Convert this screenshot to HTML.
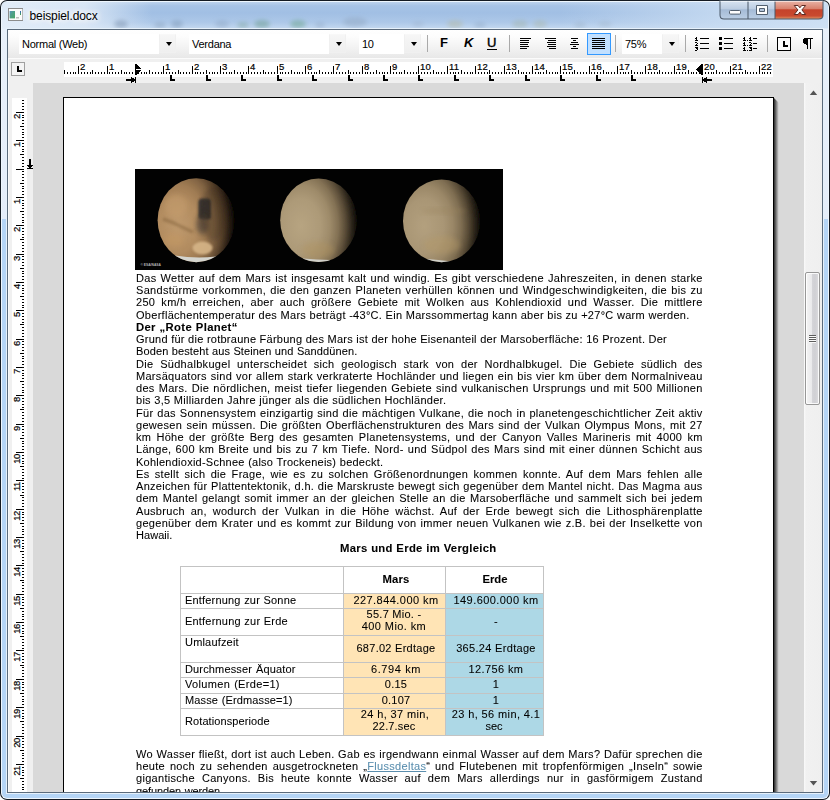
<!DOCTYPE html><html><head><meta charset="utf-8"><title>beispiel.docx</title><style>
*{box-sizing:border-box;margin:0;padding:0}
html,body{width:830px;height:800px;overflow:hidden;background:#fff;font-family:"Liberation Sans",sans-serif;}
.abs{position:absolute}
#win{position:absolute;left:0;top:0;width:830px;height:800px;border-radius:7px 7px 7px 7px;background:#141a22;overflow:hidden}
#win .in1{position:absolute;left:1px;top:1px;right:1px;bottom:1px;border-radius:6px;background:#eef6fd}
#win .glass{position:absolute;left:2px;top:2px;right:2px;bottom:2px;border-radius:5px;background:linear-gradient(180deg,#e9f1fb 0,#e4edf9 217px,#b5d5f6 217px,#b5d5f6 100%)}
#title{position:absolute;left:2px;top:2px;width:826px;height:27px;border-radius:5px 5px 0 0;
  background:linear-gradient(180deg,#bcd2ec 0%,#a7c3e6 14%,#a1bfe4 40%,#adc8e8 75%,#c4d9f0 100%);}
#titleglowL{position:absolute;left:2px;top:2px;width:150px;height:27px;border-radius:5px 0 0 0;
  background:linear-gradient(90deg,rgba(228,238,249,.95) 0%,rgba(222,234,247,.88) 55%,rgba(210,226,243,0) 100%)}
#titleglowR{position:absolute;left:560px;top:2px;width:268px;height:27px;border-radius:0 5px 0 0;
  background:linear-gradient(90deg,rgba(205,224,244,0) 0%,rgba(203,222,243,.8) 60%,rgba(208,226,245,.9) 100%)}
#ttext{position:absolute;left:29.5px;top:8.5px;font-size:12px;line-height:14px;color:#000;white-space:pre;letter-spacing:-0.1px;
  text-shadow:0 0 6px #fff,0 0 6px #fff,0 0 10px #fff}
#inner-wl{position:absolute;left:6px;top:28px;width:818px;height:766px;background:#e6f1fb}
#cborder{position:absolute;left:7px;top:29px;width:816px;height:764px;background:#5b6b7c}
#client{position:absolute;left:8px;top:30px;width:814px;height:762px;background:#f0f0f0;overflow:hidden}
/* coordinates inside client are offset by (8,30); use .c wrapper with negative offset to use absolute coords */
#c{position:absolute;left:-8px;top:-30px;width:830px;height:800px}
#tb{position:absolute;left:8px;top:30px;width:814px;height:28px;background:linear-gradient(180deg,#ffffff 0%,#fcfcfc 25%,#f3f3f3 60%,#e8e8e8 100%)}
#tbline{position:absolute;left:8px;top:58px;width:814px;height:1px;background:#fbfbfb}
.combo{position:absolute;top:34px;height:20px;background:#fff}
.combo .t{position:absolute;left:3px;top:3px;font-size:11px;line-height:14px;white-space:pre;letter-spacing:-0.25px;color:#000}
.cbtn{position:absolute;top:34px;height:19px;width:17px;background:linear-gradient(180deg,#f6f6f6,#efefef);border:1px solid #f0f0f0;border-top-color:#f8f8f8}
.cbtn:after{content:"";position:absolute;left:6px;top:7px;border:3.5px solid transparent;border-top:4px solid #000;border-bottom:0}
.sep{position:absolute;top:35px;width:1px;height:17px;background:#a9a9a9}
.ico{position:absolute}
.doc{position:absolute;left:33px;top:83px;width:771px;height:709px;background:#d9d9d9}
.page{position:absolute;left:63px;top:97px;width:711px;height:720px;background:#fff;border:1px solid #000}
.pshadow{position:absolute;left:774px;top:98px;width:5px;height:700px;background:linear-gradient(90deg,#2e2e2e 0%,#4d4d4d 20%,#7c7c7c 45%,#a9a9a9 70%,#cfcfcf 90%,#d9d9d9 100%);clip-path:polygon(0 0,100% 5px,100% 100%,0 100%);}
.L{position:absolute;white-space:pre;transform-origin:0 0;color:#000;text-align:justify;text-align-last:justify;-webkit-text-stroke-width:0.07px}
.V{-webkit-text-stroke-width:0.07px}
.tcell{position:absolute;}
</style></head><body>
<div id="win"><div class="in1"></div><div class="glass"></div>
<div id="title"></div><div id="titleglowL"></div><div id="titleglowR"></div>
<svg class="abs" style="left:2px;top:2px" width="826" height="27" viewBox="2 2 826 27"><defs><filter id="bl" x="-50%" y="-50%" width="200%" height="200%"><feGaussianBlur stdDeviation="2"/></filter></defs><g filter="url(#bl)">
<ellipse cx="121" cy="24" rx="7" ry="4" fill="#7f97b3" opacity="0.55"/>
<ellipse cx="160" cy="25" rx="6" ry="3" fill="#8aa2be" opacity="0.5"/>
<ellipse cx="177" cy="24" rx="6" ry="4" fill="#7f9ab8" opacity="0.5"/>
<ellipse cx="222" cy="24" rx="7" ry="4" fill="#86a0bd" opacity="0.4"/>
<ellipse cx="243" cy="25" rx="6" ry="3" fill="#7fa6a0" opacity="0.5"/>
<ellipse cx="262" cy="24" rx="8" ry="4" fill="#6f9f93" opacity="0.55"/>
<ellipse cx="298" cy="24" rx="8" ry="4" fill="#6fa592" opacity="0.55"/>
<ellipse cx="320" cy="25" rx="5" ry="3" fill="#8aa2be" opacity="0.4"/>
<ellipse cx="355" cy="22" rx="12" ry="5" fill="#8fa4bf" opacity="0.45"/>
<ellipse cx="418" cy="24" rx="6" ry="3" fill="#9ab0c8" opacity="0.4"/>
<ellipse cx="455" cy="24" rx="8" ry="4" fill="#b3b69c" opacity="0.45"/>
<ellipse cx="480" cy="25" rx="6" ry="3" fill="#8aa2be" opacity="0.4"/>
<ellipse cx="520" cy="24" rx="8" ry="4" fill="#9fb09f" opacity="0.4"/>
<ellipse cx="540" cy="24" rx="7" ry="4" fill="#a9b3a0" opacity="0.4"/>
<ellipse cx="580" cy="25" rx="6" ry="3" fill="#9aaec4" opacity="0.4"/>
<ellipse cx="605" cy="24" rx="7" ry="3" fill="#9aaec4" opacity="0.35"/>
</g></svg>
<div style="position:absolute;left:2px;top:28px;width:826px;height:1px;background:rgba(225,237,250,.75)"></div>
<svg class="abs" style="left:8px;top:8px" width="15" height="13" viewBox="0 0 15 13">
<defs><linearGradient id="ig" x1="0" y1="0" x2="1" y2="1"><stop offset="0" stop-color="#5a8fc0"/><stop offset=".35" stop-color="#4f9f8f"/><stop offset="1" stop-color="#4aa564"/></linearGradient>
<linearGradient id="ig2" x1="0" y1="0" x2="0" y2="1"><stop offset="0" stop-color="#2f62c0"/><stop offset="1" stop-color="#4aa850"/></linearGradient></defs>
<rect x="0" y="0" width="15" height="13" fill="#8c8c8c"/><rect x="1" y="1" width="13.4" height="11" fill="#fbfbfb"/>
<rect x="1.6" y="3" width="5.4" height="7.4" fill="url(#ig)"/><rect x="8" y="9" width="3" height="1.5" fill="#bdbdbd"/><rect x="12" y="3" width="1" height="4" fill="url(#ig2)"/></svg>
<div id="ttext">beispiel.docx</div>
<svg class="abs" style="left:719px;top:0px" width="106" height="21" viewBox="0 0 106 21">
<defs>
<linearGradient id="bg1" x1="0" y1="0" x2="0" y2="1"><stop offset="0" stop-color="#d7e3f1"/><stop offset=".45" stop-color="#bccde2"/><stop offset=".5" stop-color="#a5bbd6"/><stop offset="1" stop-color="#b9cde4"/></linearGradient>
<linearGradient id="bg2" x1="0" y1="0" x2="0" y2="1"><stop offset="0" stop-color="#e9b3a6"/><stop offset=".45" stop-color="#d9806c"/><stop offset=".5" stop-color="#c5432b"/><stop offset=".85" stop-color="#c94a2f"/><stop offset="1" stop-color="#dd8a5e"/></linearGradient>
</defs>
<path d="M0.5,0 V15 Q0.5,19.5 5,19.5 H99.5 Q104.5,19.5 104.5,15 V0 Z" fill="#4a5868"/>
<path d="M1.5,1 V15 Q1.5,18.5 5,18.5 H28.5 V1 Z" fill="url(#bg1)"/>
<path d="M29.5,1 V18.5 H55.5 V1 Z" fill="url(#bg1)"/>
<path d="M56.5,1 V18.5 H99.5 Q103.5,18.5 103.5,15 V1 Z" fill="url(#bg2)"/>
<path d="M1.5,1.5 H103.5" stroke="rgba(255,255,255,.55)" stroke-width="1"/>
<rect x="10.5" y="10.5" width="11" height="3.6" rx="1" fill="#fdfdfd" stroke="#53606f" stroke-width="1"/>
<path d="M37.5,5.5 h11 v9 h-11 z" fill="#fdfdfd" stroke="#53606f" stroke-width="1"/><path d="M40.5,8.5 h5 v3 h-5 z" fill="#b5c6dc" stroke="#53606f" stroke-width="1"/>
<path d="M75.2,5.5 l3.9,0 l1.8,2.3 l1.8,-2.3 l3.9,0 l-3.7,4.4 l3.7,4.6 l-3.9,0 l-1.8,-2.5 l-1.8,2.5 l-3.9,0 l3.7,-4.6 z" fill="#fdfdfd" stroke="#5d2a22" stroke-width="1" stroke-linejoin="round"/>
</svg>
<div id="inner-wl"></div><div id="cborder"></div><div id="client"><div id="c">
<div id="tb"></div><div id="tbline"></div>
<div class="combo" style="left:19px;width:140px"><div class="t">Normal (Web)</div></div><div class="cbtn" style="left:159px"></div>
<div class="combo" style="left:189px;width:140px"><div class="t">Verdana</div></div><div class="cbtn" style="left:329px"></div>
<div class="combo" style="left:359px;width:45px"><div class="t">10</div></div><div class="cbtn" style="left:404px"></div>
<div class="combo" style="left:622px;width:40px"><div class="t">75%</div></div><div class="cbtn" style="left:662px"></div>
<div class="sep" style="left:427px"></div>
<div class="sep" style="left:509px"></div>
<div class="sep" style="left:615px"></div>
<div class="sep" style="left:685px"></div>
<div class="sep" style="left:767px"></div>
<div class="abs" style="left:440px;top:35px;font-size:13px;font-weight:700;line-height:16px">F</div>
<div class="abs" style="left:464px;top:35px;font-size:13px;font-weight:700;font-style:italic;line-height:16px">K</div>
<div class="abs" style="left:487px;top:35px;font-size:13px;font-weight:400;line-height:16px;-webkit-text-stroke:0.4px #000">U</div><div class="abs" style="left:487px;top:49px;width:10px;height:1px;background:#000"></div>
<div class="abs" style="left:520px;top:38px;width:11px;height:1px;background:#000"></div><div class="abs" style="left:520px;top:40px;width:9px;height:1px;background:#000"></div><div class="abs" style="left:520px;top:42px;width:9px;height:1px;background:#000"></div><div class="abs" style="left:520px;top:44px;width:8px;height:1px;background:#000"></div><div class="abs" style="left:520px;top:46px;width:9px;height:1px;background:#000"></div><div class="abs" style="left:520px;top:48px;width:7px;height:1px;background:#000"></div>
<div class="abs" style="left:545px;top:38px;width:11px;height:1px;background:#000"></div><div class="abs" style="left:548px;top:40px;width:8px;height:1px;background:#000"></div><div class="abs" style="left:547px;top:42px;width:9px;height:1px;background:#000"></div><div class="abs" style="left:548px;top:44px;width:8px;height:1px;background:#000"></div><div class="abs" style="left:547px;top:46px;width:9px;height:1px;background:#000"></div><div class="abs" style="left:549px;top:48px;width:7px;height:1px;background:#000"></div>
<div class="abs" style="left:571.0px;top:38px;width:7px;height:1px;background:#000"></div><div class="abs" style="left:573.0px;top:40px;width:3px;height:1px;background:#000"></div><div class="abs" style="left:571.0px;top:42px;width:7px;height:1px;background:#000"></div><div class="abs" style="left:570.0px;top:44px;width:9px;height:1px;background:#000"></div><div class="abs" style="left:573.0px;top:46px;width:3px;height:1px;background:#000"></div><div class="abs" style="left:571.0px;top:48px;width:7px;height:1px;background:#000"></div>
<div class="abs" style="left:587px;top:33px;width:24px;height:22px;background:#c2e0ff;border:1px solid #3399ff"></div>
<div class="abs" style="left:592px;top:38px;width:13px;height:1px;background:#000"></div><div class="abs" style="left:592px;top:40px;width:13px;height:1px;background:#000"></div><div class="abs" style="left:592px;top:42px;width:13px;height:1px;background:#000"></div><div class="abs" style="left:592px;top:44px;width:13px;height:1px;background:#000"></div><div class="abs" style="left:592px;top:46px;width:13px;height:1px;background:#000"></div><div class="abs" style="left:592px;top:48px;width:13px;height:1px;background:#000"></div>
<svg class="abs" style="left:694px;top:35px" width="18" height="18" viewBox="694 35 18 18" shape-rendering="crispEdges"><g fill="#000"><rect x="700" y="38" width="9" height="1"/><rect x="700" y="43" width="9" height="1"/><rect x="700" y="48" width="9" height="1"/><rect x="696" y="37" width="1" height="1"/><rect x="695" y="38" width="2" height="1"/><rect x="696" y="39" width="1" height="1"/><rect x="695" y="40" width="3" height="1"/><rect x="695" y="42" width="2" height="1"/><rect x="697" y="43" width="1" height="1"/><rect x="696" y="44" width="1" height="1"/><rect x="695" y="45" width="3" height="1"/><rect x="695" y="47" width="3" height="1"/><rect x="696" y="48" width="2" height="1"/><rect x="697" y="49" width="1" height="1"/><rect x="695" y="50" width="2" height="1"/></g></svg>
<svg class="abs" style="left:718px;top:35px" width="18" height="18" viewBox="718 35 18 18" shape-rendering="crispEdges"><g fill="#000">
<rect x="719" y="37" width="3" height="3"/><rect x="719" y="42" width="3" height="3"/><rect x="719" y="47" width="3" height="3"/>
<rect x="724" y="38" width="9" height="1"/><rect x="724" y="43" width="9" height="1"/><rect x="724" y="48" width="9" height="1"/></g></svg>
<svg class="abs" style="left:742px;top:35px" width="18" height="18" viewBox="742 35 18 18" shape-rendering="crispEdges"><g fill="#000"><rect x="744" y="37" width="1" height="4"/><rect x="743" y="38" width="1" height="1"/><rect x="743" y="40" width="3" height="1"/><rect x="747" y="40" width="1" height="1"/><rect x="750" y="37" width="1" height="4"/><rect x="749" y="38" width="1" height="1"/><rect x="749" y="40" width="3" height="1"/><rect x="753" y="38" width="4" height="1"/><rect x="744" y="42" width="1" height="4"/><rect x="743" y="43" width="1" height="1"/><rect x="743" y="45" width="3" height="1"/><rect x="747" y="45" width="1" height="1"/><rect x="749" y="42" width="2" height="1"/><rect x="751" y="43" width="1" height="1"/><rect x="750" y="44" width="1" height="1"/><rect x="749" y="45" width="3" height="1"/><rect x="753" y="43" width="4" height="1"/><rect x="744" y="47" width="1" height="4"/><rect x="743" y="48" width="1" height="1"/><rect x="743" y="50" width="3" height="1"/><rect x="747" y="50" width="1" height="1"/><rect x="749" y="47" width="3" height="1"/><rect x="750" y="48" width="2" height="1"/><rect x="751" y="49" width="1" height="1"/><rect x="749" y="50" width="3" height="1"/><rect x="753" y="48" width="4" height="1"/></g></svg>
<div class="abs" style="left:777px;top:37px;width:14px;height:14px;border:1px solid #000;background:#fdfdfd"></div><div class="abs" style="left:783px;top:41px;width:2px;height:6px;background:#000"></div><div class="abs" style="left:783px;top:45px;width:5px;height:2px;background:#000"></div>
<svg class="abs" style="left:800px;top:35px" width="16" height="18" viewBox="800 35 16 18" shape-rendering="crispEdges"><g fill="#000"><rect x="804" y="38" width="9" height="1"/><rect x="803" y="39" width="5" height="1"/><rect x="803" y="40" width="5" height="1"/><rect x="803" y="41" width="5" height="1"/><rect x="803" y="42" width="5" height="1"/><rect x="804" y="43" width="4" height="1"/><rect x="806" y="44" width="2" height="1"/><rect x="810" y="39" width="1" height="1"/><rect x="810" y="40" width="1" height="1"/><rect x="810" y="41" width="1" height="1"/><rect x="810" y="42" width="1" height="1"/><rect x="810" y="43" width="1" height="1"/><rect x="810" y="44" width="1" height="1"/><rect x="810" y="45" width="1" height="1"/><rect x="810" y="46" width="1" height="1"/><rect x="810" y="47" width="1" height="1"/><rect x="810" y="48" width="1" height="1"/><rect x="807" y="45" width="1" height="1"/><rect x="807" y="46" width="1" height="1"/><rect x="807" y="47" width="1" height="1"/><rect x="807" y="48" width="1" height="1"/></g></svg>
<div class="abs" style="left:11px;top:62px;width:14px;height:14px;border:1px solid #a0a0a0;background:#f4f4f4"></div><div class="abs" style="left:17px;top:66px;width:2px;height:6px;background:#000"></div><div class="abs" style="left:17px;top:70px;width:5px;height:2px;background:#000"></div>
<div class="abs" style="left:64px;top:62px;width:709px;height:15px;background:#fff"></div>
<svg class="abs" style="left:0;top:59px" width="830" height="24" viewBox="0 59 830 24" shape-rendering="crispEdges"><g fill="#000"><rect x="64" y="70" width="1" height="4"/><rect x="67" y="72" width="1" height="2"/><rect x="70" y="72" width="1" height="2"/><rect x="73" y="72" width="1" height="2"/><rect x="75" y="72" width="1" height="2"/><rect x="78" y="66" width="1" height="8"/><rect x="81" y="72" width="1" height="2"/><rect x="84" y="72" width="1" height="2"/><rect x="87" y="72" width="1" height="2"/><rect x="90" y="72" width="1" height="2"/><rect x="92" y="70" width="1" height="4"/><rect x="95" y="72" width="1" height="2"/><rect x="98" y="72" width="1" height="2"/><rect x="101" y="72" width="1" height="2"/><rect x="104" y="72" width="1" height="2"/><rect x="107" y="66" width="1" height="8"/><rect x="109" y="72" width="1" height="2"/><rect x="112" y="72" width="1" height="2"/><rect x="115" y="72" width="1" height="2"/><rect x="118" y="72" width="1" height="2"/><rect x="121" y="70" width="1" height="4"/><rect x="124" y="72" width="1" height="2"/><rect x="126" y="72" width="1" height="2"/><rect x="129" y="72" width="1" height="2"/><rect x="132" y="72" width="1" height="2"/><rect x="138" y="72" width="1" height="2"/><rect x="141" y="72" width="1" height="2"/><rect x="144" y="72" width="1" height="2"/><rect x="146" y="72" width="1" height="2"/><rect x="149" y="70" width="1" height="4"/><rect x="152" y="72" width="1" height="2"/><rect x="155" y="72" width="1" height="2"/><rect x="158" y="72" width="1" height="2"/><rect x="161" y="72" width="1" height="2"/><rect x="163" y="66" width="1" height="8"/><rect x="166" y="72" width="1" height="2"/><rect x="169" y="72" width="1" height="2"/><rect x="172" y="72" width="1" height="2"/><rect x="175" y="72" width="1" height="2"/><rect x="178" y="70" width="1" height="4"/><rect x="180" y="72" width="1" height="2"/><rect x="183" y="72" width="1" height="2"/><rect x="186" y="72" width="1" height="2"/><rect x="189" y="72" width="1" height="2"/><rect x="192" y="66" width="1" height="8"/><rect x="195" y="72" width="1" height="2"/><rect x="197" y="72" width="1" height="2"/><rect x="200" y="72" width="1" height="2"/><rect x="203" y="72" width="1" height="2"/><rect x="206" y="70" width="1" height="4"/><rect x="209" y="72" width="1" height="2"/><rect x="212" y="72" width="1" height="2"/><rect x="214" y="72" width="1" height="2"/><rect x="217" y="72" width="1" height="2"/><rect x="220" y="66" width="1" height="8"/><rect x="223" y="72" width="1" height="2"/><rect x="226" y="72" width="1" height="2"/><rect x="229" y="72" width="1" height="2"/><rect x="231" y="72" width="1" height="2"/><rect x="234" y="70" width="1" height="4"/><rect x="237" y="72" width="1" height="2"/><rect x="240" y="72" width="1" height="2"/><rect x="243" y="72" width="1" height="2"/><rect x="246" y="72" width="1" height="2"/><rect x="248" y="66" width="1" height="8"/><rect x="251" y="72" width="1" height="2"/><rect x="254" y="72" width="1" height="2"/><rect x="257" y="72" width="1" height="2"/><rect x="260" y="72" width="1" height="2"/><rect x="263" y="70" width="1" height="4"/><rect x="265" y="72" width="1" height="2"/><rect x="268" y="72" width="1" height="2"/><rect x="271" y="72" width="1" height="2"/><rect x="274" y="72" width="1" height="2"/><rect x="277" y="66" width="1" height="8"/><rect x="280" y="72" width="1" height="2"/><rect x="282" y="72" width="1" height="2"/><rect x="285" y="72" width="1" height="2"/><rect x="288" y="72" width="1" height="2"/><rect x="291" y="70" width="1" height="4"/><rect x="294" y="72" width="1" height="2"/><rect x="297" y="72" width="1" height="2"/><rect x="299" y="72" width="1" height="2"/><rect x="302" y="72" width="1" height="2"/><rect x="305" y="66" width="1" height="8"/><rect x="308" y="72" width="1" height="2"/><rect x="311" y="72" width="1" height="2"/><rect x="314" y="72" width="1" height="2"/><rect x="316" y="72" width="1" height="2"/><rect x="319" y="70" width="1" height="4"/><rect x="322" y="72" width="1" height="2"/><rect x="325" y="72" width="1" height="2"/><rect x="328" y="72" width="1" height="2"/><rect x="331" y="72" width="1" height="2"/><rect x="333" y="66" width="1" height="8"/><rect x="336" y="72" width="1" height="2"/><rect x="339" y="72" width="1" height="2"/><rect x="342" y="72" width="1" height="2"/><rect x="345" y="72" width="1" height="2"/><rect x="348" y="70" width="1" height="4"/><rect x="350" y="72" width="1" height="2"/><rect x="353" y="72" width="1" height="2"/><rect x="356" y="72" width="1" height="2"/><rect x="359" y="72" width="1" height="2"/><rect x="362" y="66" width="1" height="8"/><rect x="365" y="72" width="1" height="2"/><rect x="367" y="72" width="1" height="2"/><rect x="370" y="72" width="1" height="2"/><rect x="373" y="72" width="1" height="2"/><rect x="376" y="70" width="1" height="4"/><rect x="379" y="72" width="1" height="2"/><rect x="382" y="72" width="1" height="2"/><rect x="384" y="72" width="1" height="2"/><rect x="387" y="72" width="1" height="2"/><rect x="390" y="66" width="1" height="8"/><rect x="393" y="72" width="1" height="2"/><rect x="396" y="72" width="1" height="2"/><rect x="399" y="72" width="1" height="2"/><rect x="401" y="72" width="1" height="2"/><rect x="404" y="70" width="1" height="4"/><rect x="407" y="72" width="1" height="2"/><rect x="410" y="72" width="1" height="2"/><rect x="413" y="72" width="1" height="2"/><rect x="416" y="72" width="1" height="2"/><rect x="418" y="66" width="1" height="8"/><rect x="421" y="72" width="1" height="2"/><rect x="424" y="72" width="1" height="2"/><rect x="427" y="72" width="1" height="2"/><rect x="430" y="72" width="1" height="2"/><rect x="433" y="70" width="1" height="4"/><rect x="436" y="72" width="1" height="2"/><rect x="438" y="72" width="1" height="2"/><rect x="441" y="72" width="1" height="2"/><rect x="444" y="72" width="1" height="2"/><rect x="447" y="66" width="1" height="8"/><rect x="450" y="72" width="1" height="2"/><rect x="453" y="72" width="1" height="2"/><rect x="455" y="72" width="1" height="2"/><rect x="458" y="72" width="1" height="2"/><rect x="461" y="70" width="1" height="4"/><rect x="464" y="72" width="1" height="2"/><rect x="467" y="72" width="1" height="2"/><rect x="470" y="72" width="1" height="2"/><rect x="472" y="72" width="1" height="2"/><rect x="475" y="66" width="1" height="8"/><rect x="478" y="72" width="1" height="2"/><rect x="481" y="72" width="1" height="2"/><rect x="484" y="72" width="1" height="2"/><rect x="487" y="72" width="1" height="2"/><rect x="489" y="70" width="1" height="4"/><rect x="492" y="72" width="1" height="2"/><rect x="495" y="72" width="1" height="2"/><rect x="498" y="72" width="1" height="2"/><rect x="501" y="72" width="1" height="2"/><rect x="504" y="66" width="1" height="8"/><rect x="506" y="72" width="1" height="2"/><rect x="509" y="72" width="1" height="2"/><rect x="512" y="72" width="1" height="2"/><rect x="515" y="72" width="1" height="2"/><rect x="518" y="70" width="1" height="4"/><rect x="521" y="72" width="1" height="2"/><rect x="523" y="72" width="1" height="2"/><rect x="526" y="72" width="1" height="2"/><rect x="529" y="72" width="1" height="2"/><rect x="532" y="66" width="1" height="8"/><rect x="535" y="72" width="1" height="2"/><rect x="538" y="72" width="1" height="2"/><rect x="540" y="72" width="1" height="2"/><rect x="543" y="72" width="1" height="2"/><rect x="546" y="70" width="1" height="4"/><rect x="549" y="72" width="1" height="2"/><rect x="552" y="72" width="1" height="2"/><rect x="555" y="72" width="1" height="2"/><rect x="557" y="72" width="1" height="2"/><rect x="560" y="66" width="1" height="8"/><rect x="563" y="72" width="1" height="2"/><rect x="566" y="72" width="1" height="2"/><rect x="569" y="72" width="1" height="2"/><rect x="572" y="72" width="1" height="2"/><rect x="574" y="70" width="1" height="4"/><rect x="577" y="72" width="1" height="2"/><rect x="580" y="72" width="1" height="2"/><rect x="583" y="72" width="1" height="2"/><rect x="586" y="72" width="1" height="2"/><rect x="589" y="66" width="1" height="8"/><rect x="591" y="72" width="1" height="2"/><rect x="594" y="72" width="1" height="2"/><rect x="597" y="72" width="1" height="2"/><rect x="600" y="72" width="1" height="2"/><rect x="603" y="70" width="1" height="4"/><rect x="606" y="72" width="1" height="2"/><rect x="608" y="72" width="1" height="2"/><rect x="611" y="72" width="1" height="2"/><rect x="614" y="72" width="1" height="2"/><rect x="617" y="66" width="1" height="8"/><rect x="620" y="72" width="1" height="2"/><rect x="623" y="72" width="1" height="2"/><rect x="625" y="72" width="1" height="2"/><rect x="628" y="72" width="1" height="2"/><rect x="631" y="70" width="1" height="4"/><rect x="634" y="72" width="1" height="2"/><rect x="637" y="72" width="1" height="2"/><rect x="640" y="72" width="1" height="2"/><rect x="642" y="72" width="1" height="2"/><rect x="645" y="66" width="1" height="8"/><rect x="648" y="72" width="1" height="2"/><rect x="651" y="72" width="1" height="2"/><rect x="654" y="72" width="1" height="2"/><rect x="657" y="72" width="1" height="2"/><rect x="659" y="70" width="1" height="4"/><rect x="662" y="72" width="1" height="2"/><rect x="665" y="72" width="1" height="2"/><rect x="668" y="72" width="1" height="2"/><rect x="671" y="72" width="1" height="2"/><rect x="674" y="66" width="1" height="8"/><rect x="676" y="72" width="1" height="2"/><rect x="679" y="72" width="1" height="2"/><rect x="682" y="72" width="1" height="2"/><rect x="685" y="72" width="1" height="2"/><rect x="688" y="70" width="1" height="4"/><rect x="691" y="72" width="1" height="2"/><rect x="693" y="72" width="1" height="2"/><rect x="696" y="72" width="1" height="2"/><rect x="699" y="72" width="1" height="2"/><rect x="702" y="66" width="1" height="8"/><rect x="705" y="72" width="1" height="2"/><rect x="708" y="72" width="1" height="2"/><rect x="711" y="72" width="1" height="2"/><rect x="713" y="72" width="1" height="2"/><rect x="716" y="70" width="1" height="4"/><rect x="719" y="72" width="1" height="2"/><rect x="722" y="72" width="1" height="2"/><rect x="725" y="72" width="1" height="2"/><rect x="728" y="72" width="1" height="2"/><rect x="730" y="66" width="1" height="8"/><rect x="733" y="72" width="1" height="2"/><rect x="736" y="72" width="1" height="2"/><rect x="739" y="72" width="1" height="2"/><rect x="742" y="72" width="1" height="2"/><rect x="745" y="70" width="1" height="4"/><rect x="747" y="72" width="1" height="2"/><rect x="750" y="72" width="1" height="2"/><rect x="753" y="72" width="1" height="2"/><rect x="756" y="72" width="1" height="2"/><rect x="759" y="66" width="1" height="8"/><rect x="762" y="72" width="1" height="2"/><rect x="764" y="72" width="1" height="2"/><rect x="767" y="72" width="1" height="2"/><rect x="770" y="72" width="1" height="2"/><rect x="170" y="75" width="2" height="6"/><rect x="170" y="79" width="5" height="2"/><rect x="206" y="75" width="2" height="6"/><rect x="206" y="79" width="5" height="2"/><rect x="241" y="75" width="2" height="6"/><rect x="241" y="79" width="5" height="2"/><rect x="277" y="75" width="2" height="6"/><rect x="277" y="79" width="5" height="2"/><rect x="312" y="75" width="2" height="6"/><rect x="312" y="79" width="5" height="2"/><rect x="348" y="75" width="2" height="6"/><rect x="348" y="79" width="5" height="2"/><rect x="383" y="75" width="2" height="6"/><rect x="383" y="79" width="5" height="2"/><rect x="418" y="75" width="2" height="6"/><rect x="418" y="79" width="5" height="2"/><rect x="454" y="75" width="2" height="6"/><rect x="454" y="79" width="5" height="2"/><rect x="489" y="75" width="2" height="6"/><rect x="489" y="79" width="5" height="2"/><rect x="525" y="75" width="2" height="6"/><rect x="525" y="79" width="5" height="2"/><rect x="560" y="75" width="2" height="6"/><rect x="560" y="79" width="5" height="2"/><rect x="596" y="75" width="2" height="6"/><rect x="596" y="79" width="5" height="2"/><rect x="631" y="75" width="2" height="6"/><rect x="631" y="79" width="5" height="2"/></g></svg>
<div class="abs" style="left:80px;top:61px;font-size:9.5px;line-height:11px;letter-spacing:0.15px;-webkit-text-stroke-width:0.2px;color:#000">2</div>
<div class="abs" style="left:109px;top:61px;font-size:9.5px;line-height:11px;letter-spacing:0.15px;-webkit-text-stroke-width:0.2px;color:#000">1</div>
<div class="abs" style="left:165px;top:61px;font-size:9.5px;line-height:11px;letter-spacing:0.15px;-webkit-text-stroke-width:0.2px;color:#000">1</div>
<div class="abs" style="left:194px;top:61px;font-size:9.5px;line-height:11px;letter-spacing:0.15px;-webkit-text-stroke-width:0.2px;color:#000">2</div>
<div class="abs" style="left:222px;top:61px;font-size:9.5px;line-height:11px;letter-spacing:0.15px;-webkit-text-stroke-width:0.2px;color:#000">3</div>
<div class="abs" style="left:250px;top:61px;font-size:9.5px;line-height:11px;letter-spacing:0.15px;-webkit-text-stroke-width:0.2px;color:#000">4</div>
<div class="abs" style="left:279px;top:61px;font-size:9.5px;line-height:11px;letter-spacing:0.15px;-webkit-text-stroke-width:0.2px;color:#000">5</div>
<div class="abs" style="left:307px;top:61px;font-size:9.5px;line-height:11px;letter-spacing:0.15px;-webkit-text-stroke-width:0.2px;color:#000">6</div>
<div class="abs" style="left:335px;top:61px;font-size:9.5px;line-height:11px;letter-spacing:0.15px;-webkit-text-stroke-width:0.2px;color:#000">7</div>
<div class="abs" style="left:364px;top:61px;font-size:9.5px;line-height:11px;letter-spacing:0.15px;-webkit-text-stroke-width:0.2px;color:#000">8</div>
<div class="abs" style="left:392px;top:61px;font-size:9.5px;line-height:11px;letter-spacing:0.15px;-webkit-text-stroke-width:0.2px;color:#000">9</div>
<div class="abs" style="left:420px;top:61px;font-size:9.5px;line-height:11px;letter-spacing:0.15px;-webkit-text-stroke-width:0.2px;color:#000">10</div>
<div class="abs" style="left:449px;top:61px;font-size:9.5px;line-height:11px;letter-spacing:0.15px;-webkit-text-stroke-width:0.2px;color:#000">11</div>
<div class="abs" style="left:477px;top:61px;font-size:9.5px;line-height:11px;letter-spacing:0.15px;-webkit-text-stroke-width:0.2px;color:#000">12</div>
<div class="abs" style="left:506px;top:61px;font-size:9.5px;line-height:11px;letter-spacing:0.15px;-webkit-text-stroke-width:0.2px;color:#000">13</div>
<div class="abs" style="left:534px;top:61px;font-size:9.5px;line-height:11px;letter-spacing:0.15px;-webkit-text-stroke-width:0.2px;color:#000">14</div>
<div class="abs" style="left:562px;top:61px;font-size:9.5px;line-height:11px;letter-spacing:0.15px;-webkit-text-stroke-width:0.2px;color:#000">15</div>
<div class="abs" style="left:591px;top:61px;font-size:9.5px;line-height:11px;letter-spacing:0.15px;-webkit-text-stroke-width:0.2px;color:#000">16</div>
<div class="abs" style="left:619px;top:61px;font-size:9.5px;line-height:11px;letter-spacing:0.15px;-webkit-text-stroke-width:0.2px;color:#000">17</div>
<div class="abs" style="left:647px;top:61px;font-size:9.5px;line-height:11px;letter-spacing:0.15px;-webkit-text-stroke-width:0.2px;color:#000">18</div>
<div class="abs" style="left:676px;top:61px;font-size:9.5px;line-height:11px;letter-spacing:0.15px;-webkit-text-stroke-width:0.2px;color:#000">19</div>
<div class="abs" style="left:704px;top:61px;font-size:9.5px;line-height:11px;letter-spacing:0.15px;-webkit-text-stroke-width:0.2px;color:#000">20</div>
<div class="abs" style="left:732px;top:61px;font-size:9.5px;line-height:11px;letter-spacing:0.15px;-webkit-text-stroke-width:0.2px;color:#000">21</div>
<div class="abs" style="left:761px;top:61px;font-size:9.5px;line-height:11px;letter-spacing:0.15px;-webkit-text-stroke-width:0.2px;color:#000">22</div>
<svg class="abs" style="left:120px;top:60px" width="30" height="24" viewBox="120 60 30 24" shape-rendering="crispEdges"><g fill="#000"><rect x="135" y="64" width="2" height="1"/><rect x="135" y="65" width="3" height="1"/><rect x="135" y="66" width="4" height="1"/><rect x="135" y="67" width="5" height="1"/><rect x="135" y="68" width="6" height="1"/><rect x="135" y="69" width="1" height="1"/><rect x="135" y="70" width="6" height="1"/><rect x="135" y="71" width="5" height="1"/><rect x="135" y="72" width="4" height="1"/><rect x="135" y="73" width="3" height="1"/><rect x="135" y="74" width="2" height="1"/><rect x="126" y="79" width="9" height="1"/><rect x="126" y="80" width="9" height="1"/><rect x="131" y="77" width="1" height="1"/><rect x="131" y="78" width="2" height="1"/><rect x="131" y="81" width="2" height="1"/><rect x="131" y="82" width="1" height="1"/><rect x="133" y="78" width="1" height="1"/><rect x="133" y="81" width="1" height="1"/><rect x="135" y="77" width="1" height="1"/><rect x="135" y="78" width="1" height="1"/><rect x="135" y="79" width="1" height="1"/><rect x="135" y="80" width="1" height="1"/><rect x="135" y="81" width="1" height="1"/><rect x="135" y="82" width="1" height="1"/></g></svg>
<svg class="abs" style="left:690px;top:60px" width="30" height="24" viewBox="690 60 30 24" shape-rendering="crispEdges"><g fill="#000"><rect x="701" y="64" width="2" height="1"/><rect x="700" y="65" width="3" height="1"/><rect x="699" y="66" width="4" height="1"/><rect x="698" y="67" width="5" height="1"/><rect x="697" y="68" width="6" height="1"/><rect x="696" y="69" width="7" height="1"/><rect x="697" y="70" width="6" height="1"/><rect x="698" y="71" width="5" height="1"/><rect x="699" y="72" width="4" height="1"/><rect x="700" y="73" width="3" height="1"/><rect x="701" y="74" width="2" height="1"/><rect x="703" y="79" width="9" height="1"/><rect x="703" y="80" width="9" height="1"/><rect x="706" y="77" width="1" height="1"/><rect x="705" y="78" width="2" height="1"/><rect x="705" y="81" width="2" height="1"/><rect x="706" y="82" width="1" height="1"/><rect x="704" y="78" width="1" height="1"/><rect x="704" y="81" width="1" height="1"/><rect x="702" y="77" width="1" height="1"/><rect x="702" y="78" width="1" height="1"/><rect x="702" y="79" width="1" height="1"/><rect x="702" y="80" width="1" height="1"/><rect x="702" y="81" width="1" height="1"/><rect x="702" y="82" width="1" height="1"/></g></svg>
<div class="doc"></div>
<div class="abs" style="left:8px;top:59px;width:1px;height:733px;background:#fafafa"></div>
<div class="abs" style="left:12px;top:98px;width:15px;height:694px;background:#fff"></div>
<svg class="abs" style="left:8px;top:90px" width="30" height="702" viewBox="8 90 30 702" shape-rendering="crispEdges"><g fill="#000"><rect x="22" y="100" width="2" height="1"/><rect x="22" y="103" width="2" height="1"/><rect x="22" y="106" width="2" height="1"/><rect x="22" y="109" width="2" height="1"/><rect x="16" y="112" width="8" height="1"/><rect x="22" y="115" width="2" height="1"/><rect x="22" y="117" width="2" height="1"/><rect x="22" y="120" width="2" height="1"/><rect x="22" y="123" width="2" height="1"/><rect x="20" y="126" width="4" height="1"/><rect x="22" y="129" width="2" height="1"/><rect x="22" y="132" width="2" height="1"/><rect x="22" y="134" width="2" height="1"/><rect x="22" y="137" width="2" height="1"/><rect x="16" y="140" width="8" height="1"/><rect x="22" y="143" width="2" height="1"/><rect x="22" y="146" width="2" height="1"/><rect x="22" y="149" width="2" height="1"/><rect x="22" y="151" width="2" height="1"/><rect x="20" y="154" width="4" height="1"/><rect x="22" y="157" width="2" height="1"/><rect x="22" y="160" width="2" height="1"/><rect x="22" y="163" width="2" height="1"/><rect x="22" y="166" width="2" height="1"/><rect x="16" y="169" width="8" height="1"/><rect x="22" y="171" width="2" height="1"/><rect x="22" y="174" width="2" height="1"/><rect x="22" y="177" width="2" height="1"/><rect x="22" y="180" width="2" height="1"/><rect x="20" y="183" width="4" height="1"/><rect x="22" y="186" width="2" height="1"/><rect x="22" y="188" width="2" height="1"/><rect x="22" y="191" width="2" height="1"/><rect x="22" y="194" width="2" height="1"/><rect x="16" y="197" width="8" height="1"/><rect x="22" y="200" width="2" height="1"/><rect x="22" y="203" width="2" height="1"/><rect x="22" y="205" width="2" height="1"/><rect x="22" y="208" width="2" height="1"/><rect x="20" y="211" width="4" height="1"/><rect x="22" y="214" width="2" height="1"/><rect x="22" y="217" width="2" height="1"/><rect x="22" y="220" width="2" height="1"/><rect x="22" y="222" width="2" height="1"/><rect x="16" y="225" width="8" height="1"/><rect x="22" y="228" width="2" height="1"/><rect x="22" y="231" width="2" height="1"/><rect x="22" y="234" width="2" height="1"/><rect x="22" y="237" width="2" height="1"/><rect x="20" y="239" width="4" height="1"/><rect x="22" y="242" width="2" height="1"/><rect x="22" y="245" width="2" height="1"/><rect x="22" y="248" width="2" height="1"/><rect x="22" y="251" width="2" height="1"/><rect x="16" y="254" width="8" height="1"/><rect x="22" y="256" width="2" height="1"/><rect x="22" y="259" width="2" height="1"/><rect x="22" y="262" width="2" height="1"/><rect x="22" y="265" width="2" height="1"/><rect x="20" y="268" width="4" height="1"/><rect x="22" y="271" width="2" height="1"/><rect x="22" y="273" width="2" height="1"/><rect x="22" y="276" width="2" height="1"/><rect x="22" y="279" width="2" height="1"/><rect x="16" y="282" width="8" height="1"/><rect x="22" y="285" width="2" height="1"/><rect x="22" y="288" width="2" height="1"/><rect x="22" y="290" width="2" height="1"/><rect x="22" y="293" width="2" height="1"/><rect x="20" y="296" width="4" height="1"/><rect x="22" y="299" width="2" height="1"/><rect x="22" y="302" width="2" height="1"/><rect x="22" y="305" width="2" height="1"/><rect x="22" y="307" width="2" height="1"/><rect x="16" y="310" width="8" height="1"/><rect x="22" y="313" width="2" height="1"/><rect x="22" y="316" width="2" height="1"/><rect x="22" y="319" width="2" height="1"/><rect x="22" y="322" width="2" height="1"/><rect x="20" y="324" width="4" height="1"/><rect x="22" y="327" width="2" height="1"/><rect x="22" y="330" width="2" height="1"/><rect x="22" y="333" width="2" height="1"/><rect x="22" y="336" width="2" height="1"/><rect x="16" y="339" width="8" height="1"/><rect x="22" y="341" width="2" height="1"/><rect x="22" y="344" width="2" height="1"/><rect x="22" y="347" width="2" height="1"/><rect x="22" y="350" width="2" height="1"/><rect x="20" y="353" width="4" height="1"/><rect x="22" y="356" width="2" height="1"/><rect x="22" y="358" width="2" height="1"/><rect x="22" y="361" width="2" height="1"/><rect x="22" y="364" width="2" height="1"/><rect x="16" y="367" width="8" height="1"/><rect x="22" y="370" width="2" height="1"/><rect x="22" y="373" width="2" height="1"/><rect x="22" y="375" width="2" height="1"/><rect x="22" y="378" width="2" height="1"/><rect x="20" y="381" width="4" height="1"/><rect x="22" y="384" width="2" height="1"/><rect x="22" y="387" width="2" height="1"/><rect x="22" y="390" width="2" height="1"/><rect x="22" y="392" width="2" height="1"/><rect x="16" y="395" width="8" height="1"/><rect x="22" y="398" width="2" height="1"/><rect x="22" y="401" width="2" height="1"/><rect x="22" y="404" width="2" height="1"/><rect x="22" y="407" width="2" height="1"/><rect x="20" y="409" width="4" height="1"/><rect x="22" y="412" width="2" height="1"/><rect x="22" y="415" width="2" height="1"/><rect x="22" y="418" width="2" height="1"/><rect x="22" y="421" width="2" height="1"/><rect x="16" y="424" width="8" height="1"/><rect x="22" y="426" width="2" height="1"/><rect x="22" y="429" width="2" height="1"/><rect x="22" y="432" width="2" height="1"/><rect x="22" y="435" width="2" height="1"/><rect x="20" y="438" width="4" height="1"/><rect x="22" y="441" width="2" height="1"/><rect x="22" y="443" width="2" height="1"/><rect x="22" y="446" width="2" height="1"/><rect x="22" y="449" width="2" height="1"/><rect x="16" y="452" width="8" height="1"/><rect x="22" y="455" width="2" height="1"/><rect x="22" y="458" width="2" height="1"/><rect x="22" y="461" width="2" height="1"/><rect x="22" y="463" width="2" height="1"/><rect x="20" y="466" width="4" height="1"/><rect x="22" y="469" width="2" height="1"/><rect x="22" y="472" width="2" height="1"/><rect x="22" y="475" width="2" height="1"/><rect x="22" y="478" width="2" height="1"/><rect x="16" y="480" width="8" height="1"/><rect x="22" y="483" width="2" height="1"/><rect x="22" y="486" width="2" height="1"/><rect x="22" y="489" width="2" height="1"/><rect x="22" y="492" width="2" height="1"/><rect x="20" y="495" width="4" height="1"/><rect x="22" y="497" width="2" height="1"/><rect x="22" y="500" width="2" height="1"/><rect x="22" y="503" width="2" height="1"/><rect x="22" y="506" width="2" height="1"/><rect x="16" y="509" width="8" height="1"/><rect x="22" y="512" width="2" height="1"/><rect x="22" y="514" width="2" height="1"/><rect x="22" y="517" width="2" height="1"/><rect x="22" y="520" width="2" height="1"/><rect x="20" y="523" width="4" height="1"/><rect x="22" y="526" width="2" height="1"/><rect x="22" y="529" width="2" height="1"/><rect x="22" y="531" width="2" height="1"/><rect x="22" y="534" width="2" height="1"/><rect x="16" y="537" width="8" height="1"/><rect x="22" y="540" width="2" height="1"/><rect x="22" y="543" width="2" height="1"/><rect x="22" y="546" width="2" height="1"/><rect x="22" y="548" width="2" height="1"/><rect x="20" y="551" width="4" height="1"/><rect x="22" y="554" width="2" height="1"/><rect x="22" y="557" width="2" height="1"/><rect x="22" y="560" width="2" height="1"/><rect x="22" y="563" width="2" height="1"/><rect x="16" y="565" width="8" height="1"/><rect x="22" y="568" width="2" height="1"/><rect x="22" y="571" width="2" height="1"/><rect x="22" y="574" width="2" height="1"/><rect x="22" y="577" width="2" height="1"/><rect x="20" y="580" width="4" height="1"/><rect x="22" y="582" width="2" height="1"/><rect x="22" y="585" width="2" height="1"/><rect x="22" y="588" width="2" height="1"/><rect x="22" y="591" width="2" height="1"/><rect x="16" y="594" width="8" height="1"/><rect x="22" y="597" width="2" height="1"/><rect x="22" y="599" width="2" height="1"/><rect x="22" y="602" width="2" height="1"/><rect x="22" y="605" width="2" height="1"/><rect x="20" y="608" width="4" height="1"/><rect x="22" y="611" width="2" height="1"/><rect x="22" y="614" width="2" height="1"/><rect x="22" y="616" width="2" height="1"/><rect x="22" y="619" width="2" height="1"/><rect x="16" y="622" width="8" height="1"/><rect x="22" y="625" width="2" height="1"/><rect x="22" y="628" width="2" height="1"/><rect x="22" y="631" width="2" height="1"/><rect x="22" y="633" width="2" height="1"/><rect x="20" y="636" width="4" height="1"/><rect x="22" y="639" width="2" height="1"/><rect x="22" y="642" width="2" height="1"/><rect x="22" y="645" width="2" height="1"/><rect x="22" y="648" width="2" height="1"/><rect x="16" y="650" width="8" height="1"/><rect x="22" y="653" width="2" height="1"/><rect x="22" y="656" width="2" height="1"/><rect x="22" y="659" width="2" height="1"/><rect x="22" y="662" width="2" height="1"/><rect x="20" y="665" width="4" height="1"/><rect x="22" y="667" width="2" height="1"/><rect x="22" y="670" width="2" height="1"/><rect x="22" y="673" width="2" height="1"/><rect x="22" y="676" width="2" height="1"/><rect x="16" y="679" width="8" height="1"/><rect x="22" y="682" width="2" height="1"/><rect x="22" y="684" width="2" height="1"/><rect x="22" y="687" width="2" height="1"/><rect x="22" y="690" width="2" height="1"/><rect x="20" y="693" width="4" height="1"/><rect x="22" y="696" width="2" height="1"/><rect x="22" y="699" width="2" height="1"/><rect x="22" y="701" width="2" height="1"/><rect x="22" y="704" width="2" height="1"/><rect x="16" y="707" width="8" height="1"/><rect x="22" y="710" width="2" height="1"/><rect x="22" y="713" width="2" height="1"/><rect x="22" y="716" width="2" height="1"/><rect x="22" y="718" width="2" height="1"/><rect x="20" y="721" width="4" height="1"/><rect x="22" y="724" width="2" height="1"/><rect x="22" y="727" width="2" height="1"/><rect x="22" y="730" width="2" height="1"/><rect x="22" y="733" width="2" height="1"/><rect x="16" y="736" width="8" height="1"/><rect x="22" y="738" width="2" height="1"/><rect x="22" y="741" width="2" height="1"/><rect x="22" y="744" width="2" height="1"/><rect x="22" y="747" width="2" height="1"/><rect x="20" y="750" width="4" height="1"/><rect x="22" y="753" width="2" height="1"/><rect x="22" y="755" width="2" height="1"/><rect x="22" y="758" width="2" height="1"/><rect x="22" y="761" width="2" height="1"/><rect x="16" y="764" width="8" height="1"/><rect x="22" y="767" width="2" height="1"/><rect x="22" y="770" width="2" height="1"/><rect x="22" y="772" width="2" height="1"/><rect x="22" y="775" width="2" height="1"/><rect x="20" y="778" width="4" height="1"/><rect x="22" y="781" width="2" height="1"/><rect x="22" y="784" width="2" height="1"/><rect x="22" y="787" width="2" height="1"/><rect x="22" y="789" width="2" height="1"/></g></svg>
<div class="abs" style="left:11px;top:114px;width:0;height:0"><div style="position:absolute;right:0;top:0;transform-origin:100% 0;transform:rotate(-90deg);font-size:9.5px;line-height:11px;letter-spacing:-0.4px;-webkit-text-stroke-width:0.2px;white-space:pre;color:#000">2</div></div>
<div class="abs" style="left:11px;top:142px;width:0;height:0"><div style="position:absolute;right:0;top:0;transform-origin:100% 0;transform:rotate(-90deg);font-size:9.5px;line-height:11px;letter-spacing:-0.4px;-webkit-text-stroke-width:0.2px;white-space:pre;color:#000">1</div></div>
<div class="abs" style="left:11px;top:199px;width:0;height:0"><div style="position:absolute;right:0;top:0;transform-origin:100% 0;transform:rotate(-90deg);font-size:9.5px;line-height:11px;letter-spacing:-0.4px;-webkit-text-stroke-width:0.2px;white-space:pre;color:#000">1</div></div>
<div class="abs" style="left:11px;top:227px;width:0;height:0"><div style="position:absolute;right:0;top:0;transform-origin:100% 0;transform:rotate(-90deg);font-size:9.5px;line-height:11px;letter-spacing:-0.4px;-webkit-text-stroke-width:0.2px;white-space:pre;color:#000">2</div></div>
<div class="abs" style="left:11px;top:256px;width:0;height:0"><div style="position:absolute;right:0;top:0;transform-origin:100% 0;transform:rotate(-90deg);font-size:9.5px;line-height:11px;letter-spacing:-0.4px;-webkit-text-stroke-width:0.2px;white-space:pre;color:#000">3</div></div>
<div class="abs" style="left:11px;top:284px;width:0;height:0"><div style="position:absolute;right:0;top:0;transform-origin:100% 0;transform:rotate(-90deg);font-size:9.5px;line-height:11px;letter-spacing:-0.4px;-webkit-text-stroke-width:0.2px;white-space:pre;color:#000">4</div></div>
<div class="abs" style="left:11px;top:312px;width:0;height:0"><div style="position:absolute;right:0;top:0;transform-origin:100% 0;transform:rotate(-90deg);font-size:9.5px;line-height:11px;letter-spacing:-0.4px;-webkit-text-stroke-width:0.2px;white-space:pre;color:#000">5</div></div>
<div class="abs" style="left:11px;top:341px;width:0;height:0"><div style="position:absolute;right:0;top:0;transform-origin:100% 0;transform:rotate(-90deg);font-size:9.5px;line-height:11px;letter-spacing:-0.4px;-webkit-text-stroke-width:0.2px;white-space:pre;color:#000">6</div></div>
<div class="abs" style="left:11px;top:369px;width:0;height:0"><div style="position:absolute;right:0;top:0;transform-origin:100% 0;transform:rotate(-90deg);font-size:9.5px;line-height:11px;letter-spacing:-0.4px;-webkit-text-stroke-width:0.2px;white-space:pre;color:#000">7</div></div>
<div class="abs" style="left:11px;top:397px;width:0;height:0"><div style="position:absolute;right:0;top:0;transform-origin:100% 0;transform:rotate(-90deg);font-size:9.5px;line-height:11px;letter-spacing:-0.4px;-webkit-text-stroke-width:0.2px;white-space:pre;color:#000">8</div></div>
<div class="abs" style="left:11px;top:426px;width:0;height:0"><div style="position:absolute;right:0;top:0;transform-origin:100% 0;transform:rotate(-90deg);font-size:9.5px;line-height:11px;letter-spacing:-0.4px;-webkit-text-stroke-width:0.2px;white-space:pre;color:#000">9</div></div>
<div class="abs" style="left:11px;top:454px;width:0;height:0"><div style="position:absolute;right:0;top:0;transform-origin:100% 0;transform:rotate(-90deg);font-size:9.5px;line-height:11px;letter-spacing:-0.4px;-webkit-text-stroke-width:0.2px;white-space:pre;color:#000">10</div></div>
<div class="abs" style="left:11px;top:482px;width:0;height:0"><div style="position:absolute;right:0;top:0;transform-origin:100% 0;transform:rotate(-90deg);font-size:9.5px;line-height:11px;letter-spacing:-0.4px;-webkit-text-stroke-width:0.2px;white-space:pre;color:#000">11</div></div>
<div class="abs" style="left:11px;top:511px;width:0;height:0"><div style="position:absolute;right:0;top:0;transform-origin:100% 0;transform:rotate(-90deg);font-size:9.5px;line-height:11px;letter-spacing:-0.4px;-webkit-text-stroke-width:0.2px;white-space:pre;color:#000">12</div></div>
<div class="abs" style="left:11px;top:539px;width:0;height:0"><div style="position:absolute;right:0;top:0;transform-origin:100% 0;transform:rotate(-90deg);font-size:9.5px;line-height:11px;letter-spacing:-0.4px;-webkit-text-stroke-width:0.2px;white-space:pre;color:#000">13</div></div>
<div class="abs" style="left:11px;top:567px;width:0;height:0"><div style="position:absolute;right:0;top:0;transform-origin:100% 0;transform:rotate(-90deg);font-size:9.5px;line-height:11px;letter-spacing:-0.4px;-webkit-text-stroke-width:0.2px;white-space:pre;color:#000">14</div></div>
<div class="abs" style="left:11px;top:596px;width:0;height:0"><div style="position:absolute;right:0;top:0;transform-origin:100% 0;transform:rotate(-90deg);font-size:9.5px;line-height:11px;letter-spacing:-0.4px;-webkit-text-stroke-width:0.2px;white-space:pre;color:#000">15</div></div>
<div class="abs" style="left:11px;top:624px;width:0;height:0"><div style="position:absolute;right:0;top:0;transform-origin:100% 0;transform:rotate(-90deg);font-size:9.5px;line-height:11px;letter-spacing:-0.4px;-webkit-text-stroke-width:0.2px;white-space:pre;color:#000">16</div></div>
<div class="abs" style="left:11px;top:652px;width:0;height:0"><div style="position:absolute;right:0;top:0;transform-origin:100% 0;transform:rotate(-90deg);font-size:9.5px;line-height:11px;letter-spacing:-0.4px;-webkit-text-stroke-width:0.2px;white-space:pre;color:#000">17</div></div>
<div class="abs" style="left:11px;top:681px;width:0;height:0"><div style="position:absolute;right:0;top:0;transform-origin:100% 0;transform:rotate(-90deg);font-size:9.5px;line-height:11px;letter-spacing:-0.4px;-webkit-text-stroke-width:0.2px;white-space:pre;color:#000">18</div></div>
<div class="abs" style="left:11px;top:709px;width:0;height:0"><div style="position:absolute;right:0;top:0;transform-origin:100% 0;transform:rotate(-90deg);font-size:9.5px;line-height:11px;letter-spacing:-0.4px;-webkit-text-stroke-width:0.2px;white-space:pre;color:#000">19</div></div>
<div class="abs" style="left:11px;top:738px;width:0;height:0"><div style="position:absolute;right:0;top:0;transform-origin:100% 0;transform:rotate(-90deg);font-size:9.5px;line-height:11px;letter-spacing:-0.4px;-webkit-text-stroke-width:0.2px;white-space:pre;color:#000">20</div></div>
<div class="abs" style="left:11px;top:766px;width:0;height:0"><div style="position:absolute;right:0;top:0;transform-origin:100% 0;transform:rotate(-90deg);font-size:9.5px;line-height:11px;letter-spacing:-0.4px;-webkit-text-stroke-width:0.2px;white-space:pre;color:#000">21</div></div>
<svg class="abs" style="left:26px;top:156px" width="10" height="16" viewBox="26 156 10 16"><g shape-rendering="crispEdges" fill="#000"><rect x="29" y="159" width="2" height="9"/><rect x="27" y="165" width="6" height="1"/><rect x="28" y="166" width="4" height="1"/><rect x="27" y="168" width="6" height="1"/></g></svg>
<div class="page"></div><div class="pshadow"></div>
<div class="abs" style="left:804px;top:83px;width:18px;height:709px;background:linear-gradient(90deg,#fafafa 0,#f1f1f1 2px,#efefef 100%)"></div>
<svg class="abs" style="left:806px;top:86px" width="14" height="12" viewBox="806 86 14 12"><path d="M809.8,95 L813.5,90.6 L817.2,95 Z" fill="#555"/></svg>
<svg class="abs" style="left:806px;top:777px" width="14" height="12" viewBox="806 777 14 12"><path d="M809.8,781 L813.5,785.4 L817.2,781 Z" fill="#555"/></svg>
<div class="abs" style="left:805px;top:272px;width:15px;height:133px;border:1px solid #979797;border-radius:2px;background:linear-gradient(90deg,#f4f4f4 0%,#e9e9eb 45%,#d4d4d8 50%,#d0d0d4 70%,#dddde0 100%);box-shadow:inset 0 0 0 1px rgba(255,255,255,.85)"></div>
<div class="abs" style="left:809px;top:335px;width:7px;height:1px;background:#5c5c5c"></div><div class="abs" style="left:809px;top:336px;width:7px;height:1px;background:#fafafa"></div>
<div class="abs" style="left:809px;top:337px;width:7px;height:1px;background:#5c5c5c"></div><div class="abs" style="left:809px;top:338px;width:7px;height:1px;background:#fafafa"></div>
<div class="abs" style="left:809px;top:339px;width:7px;height:1px;background:#5c5c5c"></div><div class="abs" style="left:809px;top:340px;width:7px;height:1px;background:#fafafa"></div>
<div class="abs" style="left:809px;top:341px;width:7px;height:1px;background:#5c5c5c"></div><div class="abs" style="left:809px;top:342px;width:7px;height:1px;background:#fafafa"></div>
<svg class="abs" style="left:135px;top:169px" width="368" height="101" viewBox="135 169 368 101"><defs><filter id="b1" x="-40%" y="-40%" width="180%" height="180%"><feGaussianBlur stdDeviation="2.4"/></filter><filter id="b2" x="-40%" y="-40%" width="180%" height="180%"><feGaussianBlur stdDeviation="1.2"/></filter><filter id="b3" x="-20%" y="-40%" width="140%" height="180%"><feGaussianBlur stdDeviation="0.7"/></filter><filter id="b0" x="-5%" y="-5%" width="110%" height="110%"><feGaussianBlur stdDeviation="0.55"/></filter><radialGradient id="pg1" gradientUnits="userSpaceOnUse" cx="178" cy="225" r="59" gradientTransform="translate(178 225) scale(1 1.4) translate(-178 -225)"><stop offset="0" stop-color="#bf9a6e"/><stop offset="0.33" stop-color="#b28c60"/><stop offset="0.49" stop-color="#9f7b53"/><stop offset="0.63" stop-color="#826443"/><stop offset="0.75" stop-color="#5a432c"/><stop offset="0.86" stop-color="#2c2015"/><stop offset="0.94" stop-color="#0f0a06"/><stop offset="1" stop-color="#030201"/></radialGradient><clipPath id="pc1"><ellipse cx="196.2" cy="220.3" rx="38.6" ry="42.0"/></clipPath><radialGradient id="pg2" gradientUnits="userSpaceOnUse" cx="301" cy="226" r="59" gradientTransform="translate(301 226) scale(1 1.4) translate(-301 -226)"><stop offset="0" stop-color="#b7a481"/><stop offset="0.33" stop-color="#ad9a78"/><stop offset="0.49" stop-color="#9e8b6a"/><stop offset="0.63" stop-color="#837154"/><stop offset="0.75" stop-color="#5b4d38"/><stop offset="0.86" stop-color="#2d261b"/><stop offset="0.94" stop-color="#100d08"/><stop offset="1" stop-color="#030201"/></radialGradient><clipPath id="pc2"><ellipse cx="318.6" cy="220.3" rx="38.4" ry="41.8"/></clipPath><radialGradient id="pg3" gradientUnits="userSpaceOnUse" cx="424" cy="226" r="59" gradientTransform="translate(424 226) scale(1 1.4) translate(-424 -226)"><stop offset="0" stop-color="#b3a07e"/><stop offset="0.33" stop-color="#a99675"/><stop offset="0.49" stop-color="#9a8767"/><stop offset="0.63" stop-color="#7f6e52"/><stop offset="0.75" stop-color="#584b36"/><stop offset="0.86" stop-color="#2c251a"/><stop offset="0.94" stop-color="#100d08"/><stop offset="1" stop-color="#030201"/></radialGradient><clipPath id="pc3"><ellipse cx="441.6" cy="220.9" rx="38.6" ry="41.3"/></clipPath></defs><rect x="135" y="169" width="368" height="101" fill="#020202"/><g filter="url(#b0)"><ellipse cx="196.2" cy="220.3" rx="38.6" ry="42.0" fill="url(#pg1)"/><g clip-path="url(#pc1)"><rect x="198.5" y="198.5" width="12.5" height="21" rx="3.5" fill="#353333" opacity=".95" filter="url(#b2)"/><rect x="197" y="214" width="12" height="18" rx="5" fill="#4a3f36" opacity=".45" filter="url(#b1)"/><ellipse cx="202" cy="226" rx="5" ry="9" fill="#5f5042" opacity=".55" filter="url(#b1)"/><ellipse cx="213" cy="214" rx="13" ry="27" fill="#2e2115" opacity=".3" filter="url(#b1)"/><ellipse cx="176" cy="206" rx="11" ry="11" fill="#caa272" opacity=".4" filter="url(#b1)"/><path d="M163,219 Q172,222 180,226 T193,232" stroke="#87663f" stroke-width="3.5" fill="none" opacity=".5" filter="url(#b2)"/><ellipse cx="202.5" cy="248" rx="10" ry="6.5" fill="#d6b588" opacity=".9" filter="url(#b2)"/><ellipse cx="174" cy="240" rx="10" ry="7" fill="#c49965" opacity=".5" filter="url(#b1)"/><path d="M175,255.4 Q195.5,258.8 216,256.4 L216,268 L175,268 Z" fill="#d4d4ce" filter="url(#b3)"/></g><ellipse cx="318.6" cy="220.3" rx="38.4" ry="41.8" fill="url(#pg2)"/><g clip-path="url(#pc2)"><ellipse cx="318" cy="250" rx="16" ry="8" fill="#b0935f" opacity=".4" filter="url(#b1)"/><path d="M303,258.5 Q316,259.9 331,259.9 L331,268 L303,268 Z" fill="#cfcfc9" filter="url(#b3)"/></g><ellipse cx="441.6" cy="220.9" rx="38.6" ry="41.3" fill="url(#pg3)"/><g clip-path="url(#pc3)"><ellipse cx="444" cy="211" rx="22" ry="2.5" fill="#9a845e" opacity=".4" filter="url(#b1)"/><ellipse cx="442" cy="245" rx="18" ry="9" fill="#b59a68" opacity=".4" filter="url(#b1)"/><path d="M427,259.1 Q438,260 450,261.2 L450,268 L427,268 Z" fill="#cfcfc9" filter="url(#b3)"/></g></g><text x="140.5" y="266.3" font-family="Liberation Sans" font-size="3.3" font-weight="700" fill="#b5b5b5">© ESA/NASA</text></svg>
<div class="L" style="left:135.60px;top:272.00px;width:515.15px;transform:scaleX(1.1);font-size:10.0px;line-height:13px;letter-spacing:0.270px;">Das Wetter auf dem Mars ist insgesamt kalt und windig. Es gibt verschiedene Jahreszeiten, in denen starke</div>
<div class="L" style="left:135.60px;top:284.00px;width:515.15px;transform:scaleX(1.1);font-size:10.0px;line-height:13px;letter-spacing:0.270px;">Sandstürme vorkommen, die den ganzen Planeten verhüllen können und Windgeschwindigkeiten, die bis zu</div>
<div class="L" style="left:135.60px;top:296.00px;width:515.15px;transform:scaleX(1.1);font-size:10.0px;line-height:13px;letter-spacing:0.270px;">250 km/h erreichen, aber auch größere Gebiete mit Wolken aus Kohlendioxid und Wasser. Die mittlere</div>
<div class="L" style="left:135.60px;top:309.00px;width:503.24px;transform:scaleX(1.1);font-size:10.0px;line-height:13px;letter-spacing:0.261px;">Oberflächentemperatur des Mars beträgt -43°C. Ein Marssommertag kann aber bis zu +27°C warm werden.</div>
<div class="L" style="left:135.60px;top:321.00px;width:89.98px;transform:scaleX(1.13);font-size:10.0px;line-height:13px;letter-spacing:0.289px;font-weight:700;">Der „Rote Planet“</div>
<div class="L" style="left:135.60px;top:333.00px;width:482.78px;transform:scaleX(1.1);font-size:10.0px;line-height:13px;letter-spacing:0.228px;">Grund für die rotbraune Färbung des Mars ist der hohe Eisenanteil der Marsoberfläche: 16 Prozent. Der</div>
<div class="L" style="left:135.60px;top:345.00px;width:201.33px;transform:scaleX(1.1);font-size:10.0px;line-height:13px;letter-spacing:0.111px;">Boden besteht aus Steinen und Sanddünen.</div>
<div class="L" style="left:135.60px;top:358.00px;width:515.15px;transform:scaleX(1.1);font-size:10.0px;line-height:13px;letter-spacing:0.270px;">Die Südhalbkugel unterscheidet sich geologisch stark von der Nordhalbkugel. Die Gebiete südlich des</div>
<div class="L" style="left:135.60px;top:370.00px;width:515.15px;transform:scaleX(1.1);font-size:10.0px;line-height:13px;letter-spacing:0.270px;">Marsäquators sind vor allem stark verkraterte Hochländer und liegen ein bis vier km über dem Normalniveau</div>
<div class="L" style="left:135.60px;top:382.00px;width:515.15px;transform:scaleX(1.1);font-size:10.0px;line-height:13px;letter-spacing:0.270px;">des Mars. Die nördlichen, meist tiefer liegenden Gebiete sind vulkanischen Ursprungs und mit 500 Millionen</div>
<div class="L" style="left:135.60px;top:394.00px;width:282.05px;transform:scaleX(1.1);font-size:10.0px;line-height:13px;letter-spacing:0.249px;">bis 3,5 Milliarden Jahre jünger als die südlichen Hochländer.</div>
<div class="L" style="left:135.60px;top:407.00px;width:515.15px;transform:scaleX(1.1);font-size:10.0px;line-height:13px;letter-spacing:0.270px;">Für das Sonnensystem einzigartig sind die mächtigen Vulkane, die noch in planetengeschichtlicher Zeit aktiv</div>
<div class="L" style="left:135.60px;top:419.00px;width:515.15px;transform:scaleX(1.1);font-size:10.0px;line-height:13px;letter-spacing:0.270px;">gewesen sein müssen. Die größten Oberflächenstrukturen des Mars sind der Vulkan Olympus Mons, mit 27</div>
<div class="L" style="left:135.60px;top:431.00px;width:515.15px;transform:scaleX(1.1);font-size:10.0px;line-height:13px;letter-spacing:0.270px;">km Höhe der größte Berg des gesamten Planetensystems, und der Canyon Valles Marineris mit 4000 km</div>
<div class="L" style="left:135.60px;top:443.00px;width:515.15px;transform:scaleX(1.1);font-size:10.0px;line-height:13px;letter-spacing:0.270px;">Länge, 600 km Breite und bis zu 7 km Tiefe. Nord- und Südpol des Mars sind mit einer dünnen Schicht aus</div>
<div class="L" style="left:135.60px;top:456.00px;width:224.87px;transform:scaleX(1.1);font-size:10.0px;line-height:13px;letter-spacing:0.223px;">Kohlendioxid-Schnee (also Trockeneis) bedeckt.</div>
<div class="L" style="left:135.60px;top:468.00px;width:515.15px;transform:scaleX(1.1);font-size:10.0px;line-height:13px;letter-spacing:0.270px;">Es stellt sich die Frage, wie es zu solchen Größenordnungen kommen konnte. Auf dem Mars fehlen alle</div>
<div class="L" style="left:135.60px;top:480.00px;width:515.15px;transform:scaleX(1.1);font-size:10.0px;line-height:13px;letter-spacing:0.270px;">Anzeichen für Plattentektonik, d.h. die Marskruste bewegt sich gegenüber dem Mantel nicht. Das Magma aus</div>
<div class="L" style="left:135.60px;top:492.00px;width:515.15px;transform:scaleX(1.1);font-size:10.0px;line-height:13px;letter-spacing:0.270px;">dem Mantel gelangt somit immer an der gleichen Stelle an die Marsoberfläche und sammelt sich bei jedem</div>
<div class="L" style="left:135.60px;top:505.00px;width:515.15px;transform:scaleX(1.1);font-size:10.0px;line-height:13px;letter-spacing:0.270px;">Ausbruch an, wodurch der Vulkan in die Höhe wächst. Auf der Erde bewegt sich die Lithosphärenplatte</div>
<div class="L" style="left:135.60px;top:517.00px;width:515.15px;transform:scaleX(1.1);font-size:10.0px;line-height:13px;letter-spacing:0.270px;">gegenüber dem Krater und es kommt zur Bildung von immer neuen Vulkanen wie z.B. bei der Inselkette von</div>
<div class="L" style="left:135.60px;top:529.00px;width:33.69px;transform:scaleX(1.1);font-size:10.0px;line-height:13px;letter-spacing:0.042px;">Hawaii.</div>
<div class="L" style="left:340.30px;top:542.00px;width:138.56px;transform:scaleX(1.13);font-size:10.0px;line-height:13px;letter-spacing:0.262px;font-weight:700;">Mars und Erde im Vergleich</div>
<div class="abs" style="left:344px;top:594px;width:101px;height:141px;background:#ffe4b5"></div>
<div class="abs" style="left:446px;top:594px;width:97px;height:141px;background:#add8e6"></div>
<div class="abs" style="left:180px;top:566px;width:364px;height:1px;background:#c3c3c3"></div>
<div class="abs" style="left:180px;top:593px;width:364px;height:1px;background:#c3c3c3"></div>
<div class="abs" style="left:180px;top:608px;width:364px;height:1px;background:#c3c3c3"></div>
<div class="abs" style="left:180px;top:635px;width:364px;height:1px;background:#c3c3c3"></div>
<div class="abs" style="left:180px;top:662px;width:364px;height:1px;background:#c3c3c3"></div>
<div class="abs" style="left:180px;top:677px;width:364px;height:1px;background:#c3c3c3"></div>
<div class="abs" style="left:180px;top:693px;width:364px;height:1px;background:#c3c3c3"></div>
<div class="abs" style="left:180px;top:708px;width:364px;height:1px;background:#c3c3c3"></div>
<div class="abs" style="left:180px;top:735px;width:364px;height:1px;background:#c3c3c3"></div>
<div class="abs" style="left:180px;top:566px;width:1px;height:170px;background:#c3c3c3"></div>
<div class="abs" style="left:343px;top:566px;width:1px;height:170px;background:#c3c3c3"></div>
<div class="abs" style="left:445px;top:566px;width:1px;height:170px;background:#c3c3c3"></div>
<div class="abs" style="left:543px;top:566px;width:1px;height:170px;background:#c3c3c3"></div>
<div class="abs V" style="left:245.75px;top:573.00px;width:300px;text-align:center;white-space:pre;font-size:10.0px;line-height:13px;letter-spacing:0.134px;transform:scaleX(1.13);transform-origin:50% 0;font-weight:700;">Mars</div>
<div class="abs V" style="left:345.3px;top:573.00px;width:300px;text-align:center;white-space:pre;font-size:10.0px;line-height:13px;letter-spacing:-0.028px;transform:scaleX(1.13);transform-origin:50% 0;font-weight:700;">Erde</div>
<div class="L" style="left:185.40px;top:594.00px;width:101.15px;transform:scaleX(1.1);font-size:10.0px;line-height:13px;letter-spacing:0.162px;">Entfernung zur Sonne</div>
<div class="abs V" style="left:245.8px;top:594.00px;width:300px;text-align:center;white-space:pre;font-size:10.0px;line-height:13px;letter-spacing:0.410px;transform:scaleX(1.1);transform-origin:50% 0;">227.844.000 km</div>
<div class="abs V" style="left:346.1px;top:594.00px;width:300px;text-align:center;white-space:pre;font-size:10.0px;line-height:13px;letter-spacing:0.397px;transform:scaleX(1.1);transform-origin:50% 0;">149.600.000 km</div>
<div class="L" style="left:185.40px;top:615.00px;width:93.51px;transform:scaleX(1.1);font-size:10.0px;line-height:13px;letter-spacing:0.179px;">Entfernung zur Erde</div>
<div class="abs V" style="left:244.0px;top:608.00px;width:300px;text-align:center;white-space:pre;font-size:10.0px;line-height:13px;letter-spacing:0.233px;transform:scaleX(1.1);transform-origin:50% 0;">55.7 Mio. -</div>
<div class="abs V" style="left:244.39999999999998px;top:620.00px;width:300px;text-align:center;white-space:pre;font-size:10.0px;line-height:13px;letter-spacing:0.371px;transform:scaleX(1.1);transform-origin:50% 0;">400 Mio. km</div>
<div class="abs V" style="left:345.5px;top:615.00px;width:300px;text-align:center;white-space:pre;font-size:10.0px;line-height:13px;letter-spacing:0.270px;transform:scaleX(1.1);transform-origin:50% 0;">-</div>
<div class="L" style="left:185.40px;top:636.00px;width:49.51px;transform:scaleX(1.1);font-size:10.0px;line-height:13px;letter-spacing:0.166px;">Umlaufzeit</div>
<div class="abs V" style="left:246.10000000000002px;top:642.00px;width:300px;text-align:center;white-space:pre;font-size:10.0px;line-height:13px;letter-spacing:0.245px;transform:scaleX(1.1);transform-origin:50% 0;">687.02 Erdtage</div>
<div class="abs V" style="left:346.1px;top:642.00px;width:300px;text-align:center;white-space:pre;font-size:10.0px;line-height:13px;letter-spacing:0.284px;transform:scaleX(1.1);transform-origin:50% 0;">365.24 Erdtage</div>
<div class="L" style="left:185.40px;top:663.00px;width:100.51px;transform:scaleX(1.1);font-size:10.0px;line-height:13px;letter-spacing:0.139px;">Durchmesser Äquator</div>
<div class="abs V" style="left:245.7px;top:663.00px;width:300px;text-align:center;white-space:pre;font-size:10.0px;line-height:13px;letter-spacing:0.539px;transform:scaleX(1.1);transform-origin:50% 0;">6.794 km</div>
<div class="abs V" style="left:346.2px;top:663.00px;width:300px;text-align:center;white-space:pre;font-size:10.0px;line-height:13px;letter-spacing:0.346px;transform:scaleX(1.1);transform-origin:50% 0;">12.756 km</div>
<div class="L" style="left:185.40px;top:678.00px;width:86.24px;transform:scaleX(1.1);font-size:10.0px;line-height:13px;letter-spacing:0.297px;">Volumen (Erde=1)</div>
<div class="abs V" style="left:245.60000000000002px;top:678.00px;width:300px;text-align:center;white-space:pre;font-size:10.0px;line-height:13px;letter-spacing:0.201px;transform:scaleX(1.1);transform-origin:50% 0;">0.15</div>
<div class="abs V" style="left:346.2px;top:678.00px;width:300px;text-align:center;white-space:pre;font-size:10.0px;line-height:13px;letter-spacing:0.270px;transform:scaleX(1.1);transform-origin:50% 0;">1</div>
<div class="L" style="left:185.40px;top:694.00px;width:97.87px;transform:scaleX(1.1);font-size:10.0px;line-height:13px;letter-spacing:0.109px;">Masse (Erdmasse=1)</div>
<div class="abs V" style="left:245.60000000000002px;top:694.00px;width:300px;text-align:center;white-space:pre;font-size:10.0px;line-height:13px;letter-spacing:0.194px;transform:scaleX(1.1);transform-origin:50% 0;">0.107</div>
<div class="abs V" style="left:346.2px;top:694.00px;width:300px;text-align:center;white-space:pre;font-size:10.0px;line-height:13px;letter-spacing:0.270px;transform:scaleX(1.1);transform-origin:50% 0;">1</div>
<div class="L" style="left:185.40px;top:715.00px;width:77.51px;transform:scaleX(1.1);font-size:10.0px;line-height:13px;letter-spacing:0.081px;">Rotationsperiode</div>
<div class="abs V" style="left:245.39999999999998px;top:708.00px;width:300px;text-align:center;white-space:pre;font-size:10.0px;line-height:13px;letter-spacing:0.350px;transform:scaleX(1.1);transform-origin:50% 0;">24 h, 37 min,</div>
<div class="abs V" style="left:243.8px;top:720.00px;width:300px;text-align:center;white-space:pre;font-size:10.0px;line-height:13px;letter-spacing:0.137px;transform:scaleX(1.1);transform-origin:50% 0;">22.7.sec</div>
<div class="abs V" style="left:345.7px;top:708.00px;width:300px;text-align:center;white-space:pre;font-size:10.0px;line-height:13px;letter-spacing:0.356px;transform:scaleX(1.1);transform-origin:50% 0;">23 h, 56 min, 4.1</div>
<div class="abs V" style="left:343.8px;top:720.00px;width:300px;text-align:center;white-space:pre;font-size:10.0px;line-height:13px;letter-spacing:0.025px;transform:scaleX(1.1);transform-origin:50% 0;">sec</div>
<div class="L" style="left:135.60px;top:748.00px;width:515.15px;transform:scaleX(1.1);font-size:10.0px;line-height:13px;letter-spacing:0.270px;">Wo Wasser fließt, dort ist auch Leben. Gab es irgendwann einmal Wasser auf dem Mars? Dafür sprechen die</div>
<div class="L" style="left:135.60px;top:760.00px;width:515.15px;transform:scaleX(1.1);font-size:10.0px;line-height:13px;letter-spacing:0.270px;">heute noch zu sehenden ausgetrockneten „<span style="color:#5a8eae;text-decoration:underline">Flussdeltas</span>“ und Flutebenen mit tropfenförmigen „Inseln“ sowie</div>
<div class="L" style="left:135.60px;top:772.00px;width:515.15px;transform:scaleX(1.1);font-size:10.0px;line-height:13px;letter-spacing:0.270px;">gigantische Canyons. Bis heute konnte Wasser auf dem Mars allerdings nur in gasförmigem Zustand</div>
<div class="L" style="left:135.60px;top:785.00px;width:79.15px;transform:scaleX(1.1);font-size:10.0px;line-height:13px;letter-spacing:-0.096px;">gefunden werden.</div>
</div></div>
</div></body></html>
